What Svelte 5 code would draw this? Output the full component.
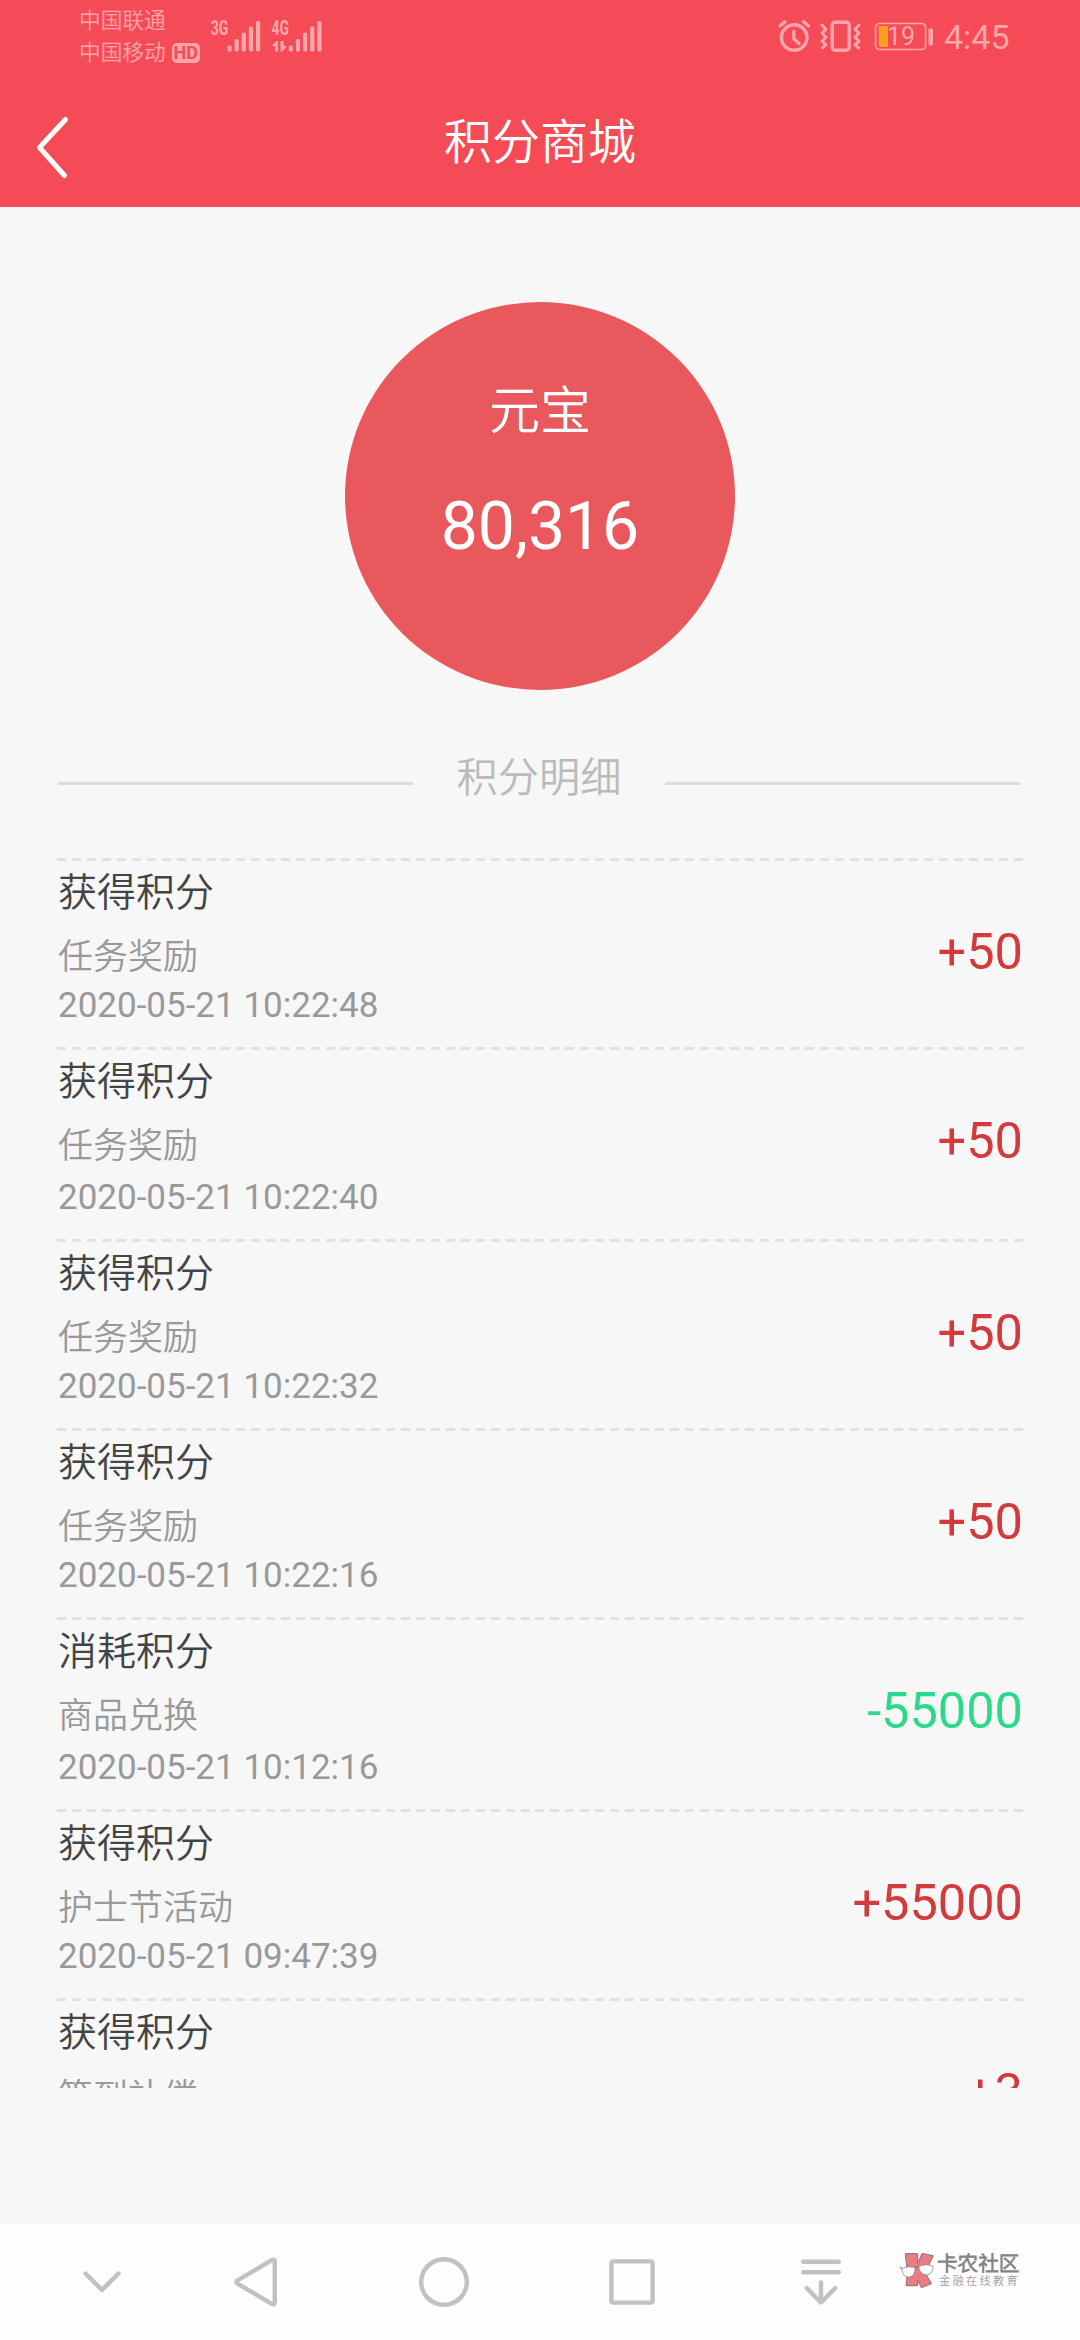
<script lang="ts">
	type Entry = {
		title: string;
		source: string;
		time: string;
		amount: number;
	};

	const balance = 80316;

	const entries: ReadonlyArray<Entry> = [
		{title: '获得积分', source: '任务奖励', time: '2020-05-21 10:22:48', amount: 50},
		{title: '获得积分', source: '任务奖励', time: '2020-05-21 10:22:40', amount: 50},
		{title: '获得积分', source: '任务奖励', time: '2020-05-21 10:22:32', amount: 50},
		{title: '获得积分', source: '任务奖励', time: '2020-05-21 10:22:16', amount: 50},
		{title: '消耗积分', source: '商品兑换', time: '2020-05-21 10:12:16', amount: -55000},
		{title: '获得积分', source: '护士节活动', time: '2020-05-21 09:47:39', amount: 55000},
		{title: '获得积分', source: '签到补偿', time: '', amount: 3},
	];

	const barTops = [45.5, 39, 32.5, 26.5, 21];
</script>

{#snippet bars(left: number)}
	{#each barTops as top, i (top)}
		<rect x={left + i * 7.15} y={top} width="4.2" height={51.6 - top} rx="1.6" />
	{/each}
{/snippet}

<div class="screen">
	<header>
		<div class="status">
			<div class="carriers">
				<span>中国联通</span>
				<span>中国移动 <b class="hd">HD</b></span>
			</div>
			<svg class="signal" width="120" height="75" viewBox="208 0 120 75">
				<text x="210.8" y="35" textLength="17.5" lengthAdjust="spacingAndGlyphs">3G</text>
				{@render bars(227.4)}
				<text x="271.5" y="35" textLength="17.5" lengthAdjust="spacingAndGlyphs">4G</text>
				<path d="M278 51.5V41h-1.5l-4.5 5h3v5.5zM280.5 41v10.5h1.5l5-5-3.5-1V41z" />
				{@render bars(288.7)}
			</svg>
			<svg class="system" width="160" height="75" viewBox="776 0 160 75">
				<g class="line">
					<circle cx="794.2" cy="37.5" r="12.8" />
					<path d="M793.8 31.5v7l5.2 5M780 26l5-4.2M803.6 21.8l5 4.2" />
					<rect x="832.2" y="22.2" width="17" height="28" rx="3" />
					<path class="shake" d="M822 25l4 4.3-4 4 4 4-4 4 4 3.5-3.5 3M859 25l-4 4.3 4 4-4 4 4 4-4 3.5 3.5 3" />
				</g>
				<rect class="cell" x="875.6" y="23.5" width="50" height="26" rx="4" />
				<rect class="level" x="878.7" y="26" width="9.3" height="21" rx="1" />
				<rect x="928.5" y="28.3" width="4.5" height="17.2" rx="1.5" />
				<text class="percent" x="887" y="45">19</text>
			</svg>
			<span class="clock">4:45</span>
		</div>
		<div class="title-bar">
			<svg class="back" width="44" height="72" viewBox="30 112 44 72">
				<path d="M65.5 119.5L39.5 147.5L64.5 175.5" />
			</svg>
			<h1>积分商城</h1>
		</div>
	</header>

	<main>
		<section class="balance">
			<div class="label">元宝</div>
			<div class="value">{balance.toLocaleString('en-US')}</div>
		</section>

		<h2>积分明细</h2>

		<ul>
			{#each entries as { title, source, time, amount }, i (i)}
				<li>
					<div class="info">
						<div class="title">{title}</div>
						<div class="source">{source}</div>
						<div class="time">{time}</div>
					</div>
					<div class="amount" class:spent={amount < 0}>{amount > 0 ? '+' : ''}{amount}</div>
				</li>
			{/each}
		</ul>
	</main>

	<nav>
		<svg width="60" height="60" viewBox="0 0 60 60"><path d="M13.5 21.5L30 38L46.5 21.5" /></svg>
		<svg width="60" height="60" viewBox="0 0 60 60"><path d="M49.8 10Q49.8 6.8 46.8 8.2L12.6 28.3Q10 30 12.6 31.7L46.8 51.8Q49.8 53.2 49.8 50Z" /></svg>
		<svg width="60" height="60" viewBox="0 0 60 60"><circle cx="30" cy="30" r="22.8" /></svg>
		<svg width="60" height="60" viewBox="0 0 60 60"><rect x="9.4" y="9.4" width="41.2" height="41.2" rx="2" /></svg>
		<svg width="60" height="60" viewBox="0 0 60 60"><path d="M12.2 9.7h35.6M12.2 20.2h35.6M30 30.5V50M15.7 36L30 50.5L44.3 36" /></svg>
		<div class="brand">
			<svg width="36" height="37" viewBox="57 66 108 111">
				<path class="k" d="M77 71H113V100L126 70L160 77L144 110L137 132L155 161L124 173L113 150V167H78L82 130Z" />
				<path class="lens" d="M65 115Q86 107 105 112Q107 140 86 142Q67 141 65 115ZM116 109Q138 100 159 108Q160 134 138 135Q118 133 116 109Z" />
				<path class="frame" d="M60 112L66 115M105 112L116 109" />
			</svg>
			<div class="brand-text">
				<strong>卡农社区</strong>
				<small>金融在线教育</small>
			</div>
		</div>
	</nav>
</div>

<style>
	:global(body) {
		background: #f7f7f7;
	}

	.screen {
		display: flex;
		flex-direction: column;
		width: 1080px;
		height: 2340px;
		overflow: hidden;
		background: #f7f7f7;
		font-family: Roboto, "Noto Sans CJK SC DemiLight", "Noto Sans CJK SC", sans-serif;
	}

	header {
		height: 207px;
		background: #f54b57;
		color: #fff;
	}

	.status {
		display: flex;
		height: 75px;
		padding-left: 79px;
		color: #ffa5ab;
		fill: #ffa5ab;
	}

	.carriers {
		display: flex;
		flex-direction: column;
		width: 129px;
		padding-top: 5px;
		font-size: 21.7px;
		font-weight: 350;
		line-height: 32px;
		white-space: nowrap;
	}

	.carriers span {
		display: flex;
		align-items: center;
		height: 32px;
		gap: 6px;
	}

	.hd {
		width: 28px;
		height: 20px;
		border-radius: 5px;
		background: #ffa5ab;
		color: #f54b57;
		font-size: 18px;
		font-weight: 700;
		line-height: 20px;
		text-align: center;
	}

	.signal text {
		font-size: 20px;
		font-weight: 700;
	}

	.system {
		margin-left: 448px;
	}

	.line {
		fill: none;
		stroke: #ffa5ab;
		stroke-width: 3.4;
		stroke-linecap: round;
		stroke-linejoin: round;
	}

	.shake {
		stroke-width: 3;
	}

	.cell {
		fill: none;
		stroke: #ffa5ab;
		stroke-width: 1.6;
	}

	.level {
		fill: #fb9f1c;
	}

	.percent {
		font-size: 25px;
	}

	.clock {
		margin-left: 8px;
		font-size: 34px;
		line-height: 75px;
	}

	.title-bar {
		display: grid;
		grid-template-columns: 1fr auto 1fr;
		align-items: center;
		height: 132px;
		padding: 0 30px;
	}

	.back {
		margin-top: 13px;
		fill: none;
		stroke: #fff;
		stroke-width: 5;
		stroke-linecap: round;
		stroke-linejoin: round;
	}

	h1 {
		margin: 0;
		padding-top: 4px;
		font-size: 48px;
		font-weight: 350;
		line-height: 60px;
	}

	main {
		height: 2017px;
	}

	.balance {
		box-sizing: border-box;
		width: 390px;
		height: 388px;
		margin: 95px auto 0;
		padding-top: 80px;
		border-radius: 50%;
		background: #e9585d;
		color: #fff;
		text-align: center;
	}

	.label {
		font-size: 51px;
		font-weight: 350;
		line-height: 60px;
	}

	.value {
		margin-top: 45px;
		font-size: 66px;
		line-height: 80px;
	}

	h2 {
		display: grid;
		grid-template-columns: 1fr 252px 1fr;
		align-items: center;
		height: 60px;
		margin: 58px 60px 50px 58px;
		color: #bbb;
		font-size: 41.2px;
		font-weight: 350;
		line-height: 60px;
		text-align: center;
	}

	h2::before,
	h2::after {
		height: 3px;
		margin-top: 11px;
		background: #dcdcdc;
		content: "";
	}

	ul {
		height: 1230px;
		margin: 0 57px;
		padding: 0;
		overflow: hidden;
		list-style: none;
	}

	li {
		display: flex;
		box-sizing: border-box;
		justify-content: space-between;
		height: 189px;
		padding: 4px 0 0 1px;
		background: repeating-linear-gradient(90deg, #e1e1e1 0 9px, transparent 9px 14.953px) top / 100% 3px no-repeat;
	}

	.title {
		color: #444;
		font-size: 39px;
		font-weight: 350;
		line-height: 63px;
	}

	.source {
		color: #999;
		font-size: 35px;
		font-weight: 350;
		line-height: 66px;
	}

	.time {
		color: #999;
		font-size: 35px;
		line-height: 30px;
	}

	li:nth-child(3n + 2) {
		height: 192px;
	}

	li:nth-child(3n + 2) .time {
		padding-top: 3px;
	}

	.amount {
		color: #d33a3c;
		font-size: 50.5px;
		line-height: 180px;
	}

	.spent {
		color: #2bd98a;
	}

	nav {
		display: grid;
		grid-template-columns: 153px 189px 188px 189px 108px auto;
		align-items: center;
		justify-content: start;
		height: 116px;
		padding-left: 72px;
		background: #fdfdfd;
		fill: none;
		stroke: #c1c1c1;
		stroke-width: 4.4;
		stroke-linecap: round;
		stroke-linejoin: round;
	}

	.brand {
		display: flex;
		margin-top: -23px;
	}

	.k {
		fill: #ec7c84;
		stroke: #857377;
		stroke-width: 3;
	}

	.lens {
		fill: #fdfdfd;
		stroke: #777;
		stroke-width: 2;
	}

	.frame {
		stroke: #777;
		stroke-width: 3;
	}

	.brand-text {
		display: flex;
		flex-direction: column;
		padding-left: 2px;
		color: #858585;
		white-space: nowrap;
	}

	strong {
		font-size: 20.6px;
		font-weight: 700;
		line-height: 24px;
	}

	small {
		padding-left: 2px;
		color: #a0a0a0;
		font-size: 11.2px;
		letter-spacing: 2.3px;
		line-height: 12px;
	}
</style>
